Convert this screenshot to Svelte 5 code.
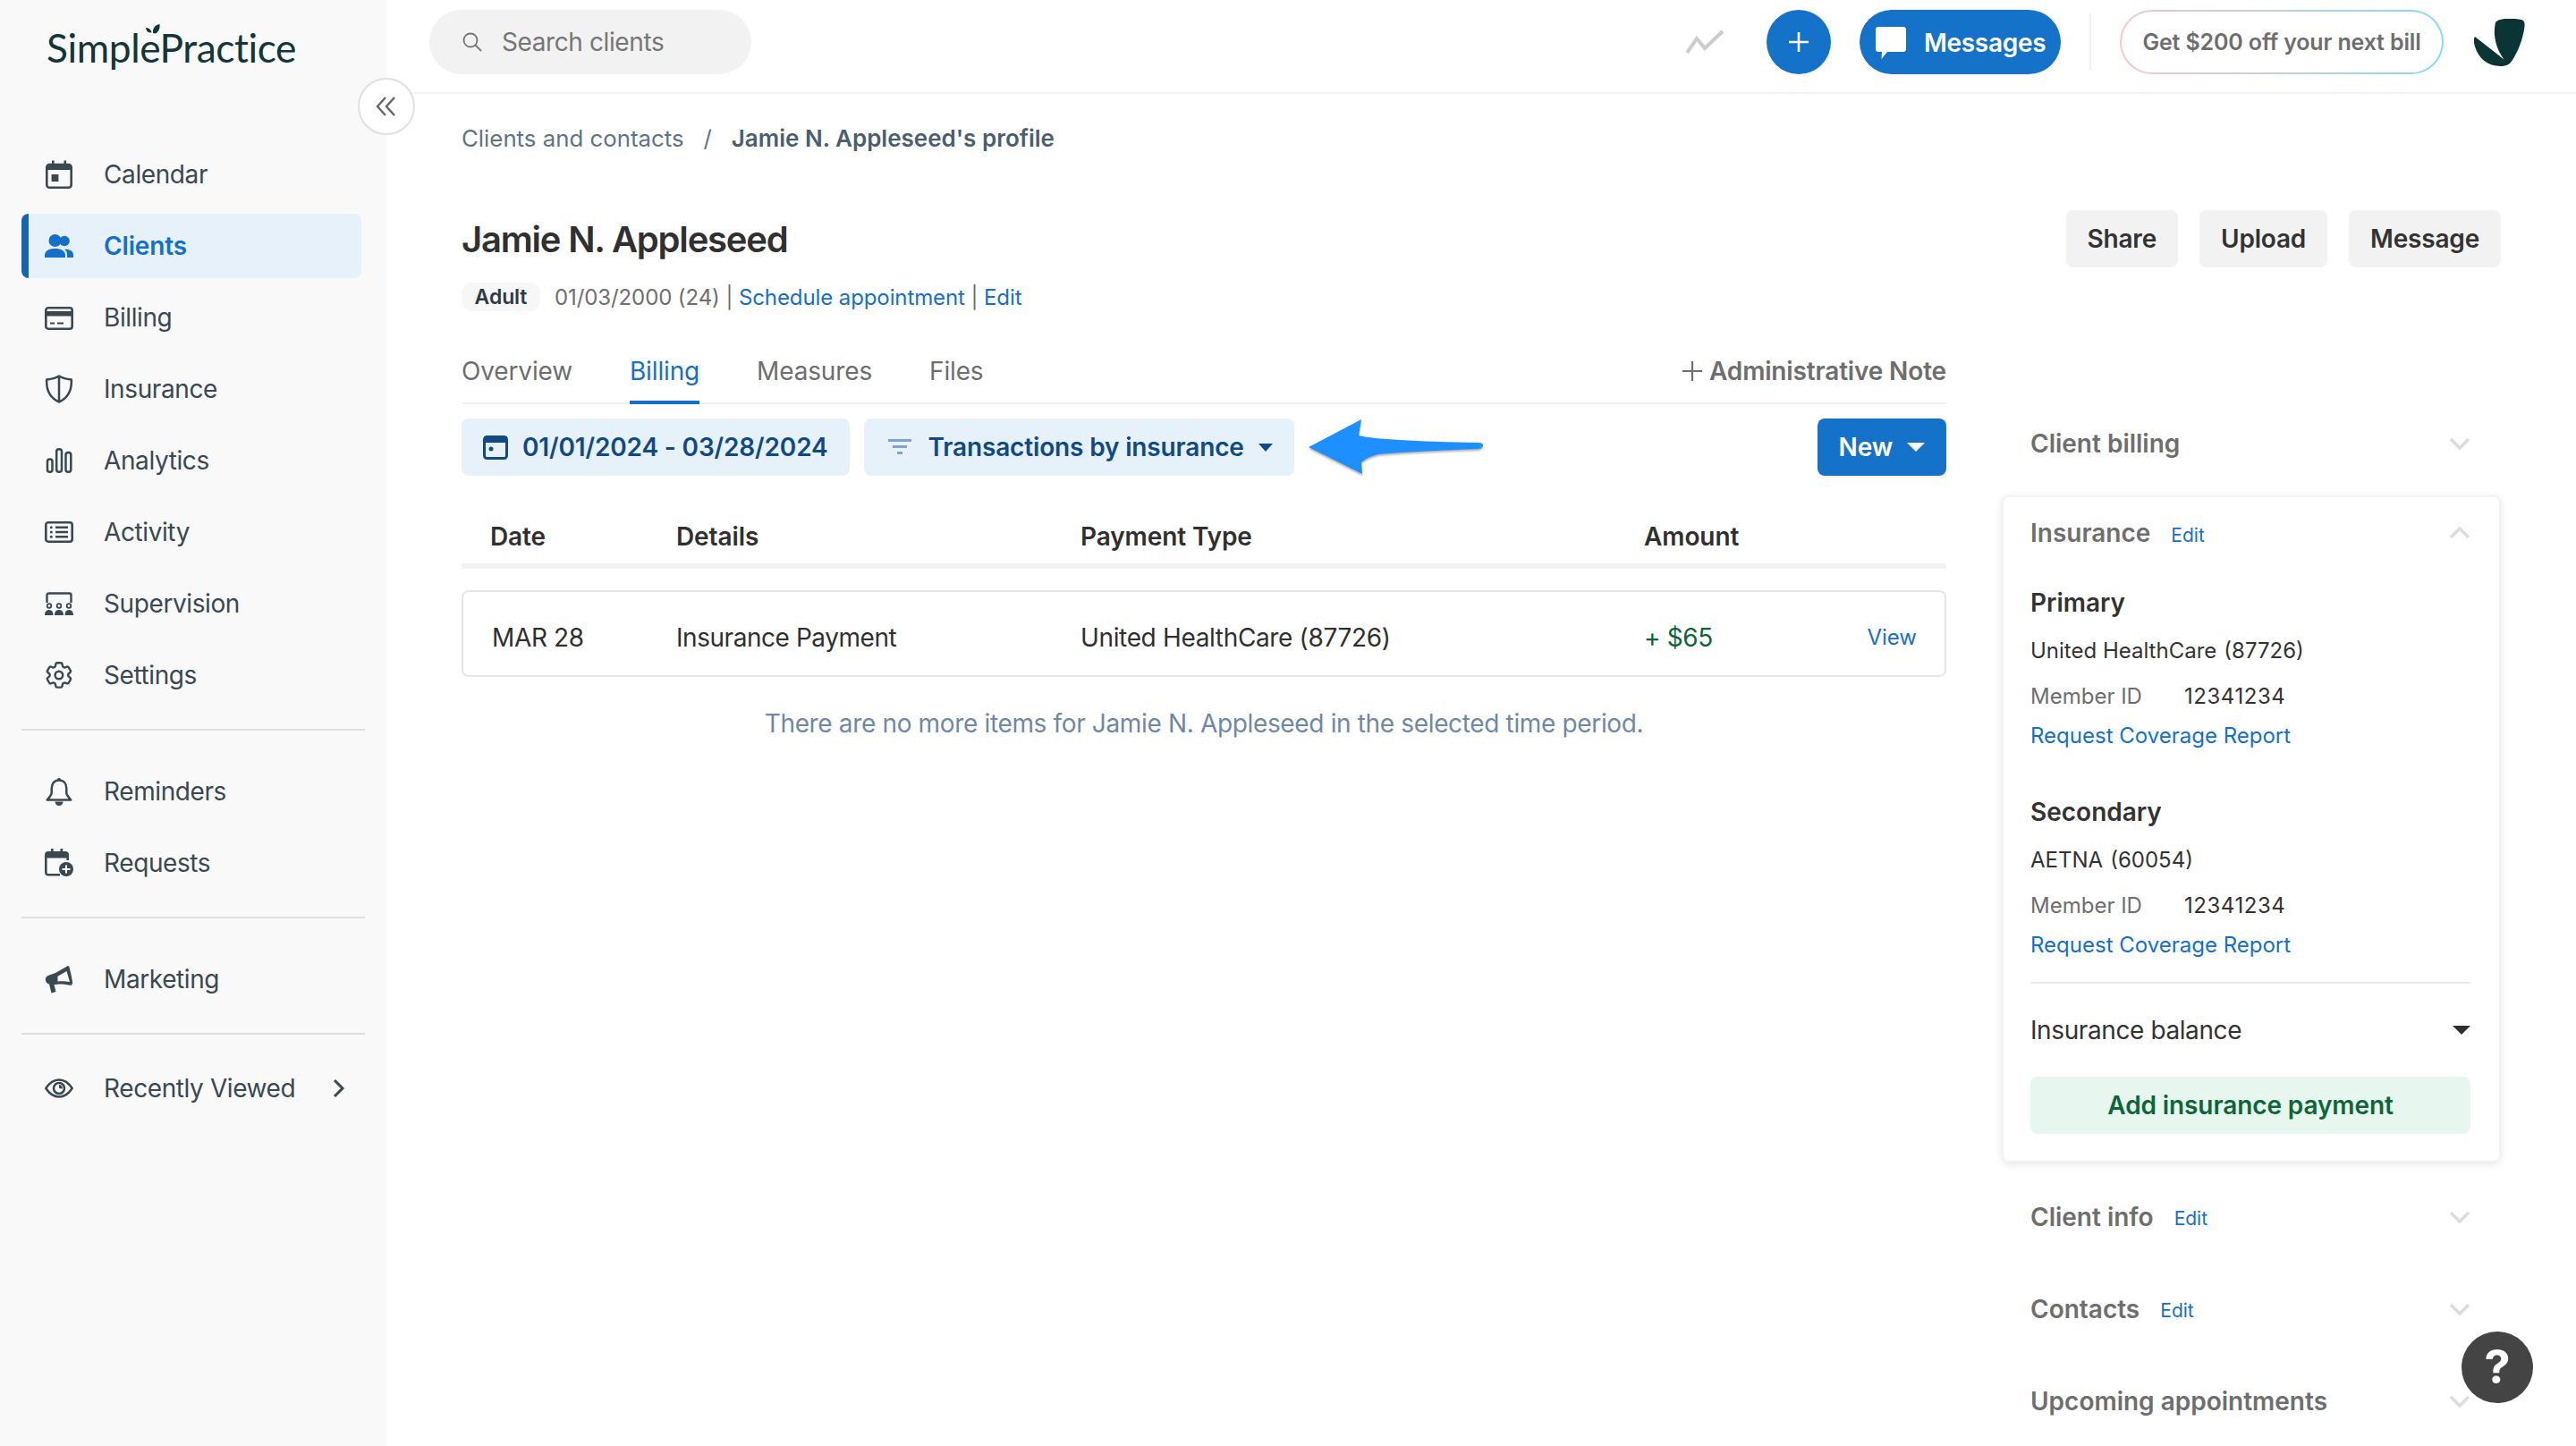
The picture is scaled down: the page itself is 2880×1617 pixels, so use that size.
<script lang="ts">
	const icons: Record<string, string> = {
		calendar: `<rect x="2.3" y="5" width="27.4" height="25.7" rx="3" fill="none" stroke="currentColor" stroke-width="2.6"/><path d="M2 5h28v6H2z" fill="currentColor"/><path d="M8 0.5h2.6V6H8zM21.5 0.5h2.6V6h-2.6z" fill="currentColor"/><rect x="7.6" y="16" width="7.8" height="8" fill="currentColor"/>`,
		users: `<circle cx="11.5" cy="10" r="7"/><circle cx="22" cy="10.5" r="5.8"/><path d="M0 29v-2.500c0-5 4.500-7.500 11.500-7.500s11.500 2.500 11.500 7.500V29z"/><path d="M25 29v-3c0-2.800-1-4.800-3-6.200 6-.4 10 2 10 6.200v3z"/>`,
		card: `<rect x="1.300" y="5.300" width="29.400" height="23.400" rx="2.600" fill="none" stroke="currentColor" stroke-width="2.600"/><path d="M1 9h30v5.500H1z" fill="currentColor"/><path d="M6 22.500h5M14 22.500h7" stroke="currentColor" stroke-width="2.200" fill="none"/>`,
		shield: `<path d="M16 1.500C20 4 24.500 5 29.800 5.500c.6 11-2.800 20-13.800 25C5 25.500 1.600 16.500 2.200 5.500 7.500 5 12 4 16 1.500zM16 2v28" fill="none" stroke="currentColor" stroke-width="2.500" stroke-linejoin="round"/>`,
		bars: `<g fill="none" stroke="currentColor" stroke-width="2.500"><rect x="3" y="14.500" width="5.500" height="14.300" rx="2.500"/><rect x="13.200" y="3.300" width="5.800" height="25.500" rx="2.800"/><rect x="23.500" y="7" width="5.800" height="21.800" rx="2.800"/></g>`,
		list: `<rect x="1.300" y="5.300" width="29.400" height="21.400" rx="2.600" fill="none" stroke="currentColor" stroke-width="2.600"/><path d="M12 10.700h14M12 16h14M12 21.300h14" stroke="currentColor" stroke-width="2.400" fill="none"/><circle cx="7.300" cy="10.700" r="1.500" fill="currentColor"/><circle cx="7.300" cy="16" r="1.500" fill="currentColor"/><circle cx="7.300" cy="21.300" r="1.500" fill="currentColor"/>`,
		board: `<path d="M2.500 15V6.500C2.500 5.300 3.300 4.500 4.500 4.500h23c1.200 0 2 .8 2 2V15" fill="none" stroke="currentColor" stroke-width="2.400"/><g fill="currentColor"><circle cx="5" cy="18.500" r="2.300" fill="none" stroke="currentColor" stroke-width="1.800"/><circle cx="16" cy="18.500" r="2.300" fill="none" stroke="currentColor" stroke-width="1.800"/><circle cx="27" cy="18.500" r="2.300" fill="none" stroke="currentColor" stroke-width="1.800"/><path d="M0 29c0-4 2-6 5-6s4.500 2 4.500 6zM11 29c0-4 2-6 5-6s5 2 5 6zM22.500 29c0-4 1.500-6 4.500-6s5 2 5 6z"/></g>`,
		gear: `<path d="M9.594 3.94c.09-.542.56-.94 1.11-.94h2.593c.55 0 1.02.398 1.11.94l.213 1.281c.063.374.313.686.645.87.074.04.147.083.22.127.324.196.72.257 1.075.124l1.217-.456a1.125 1.125 0 011.37.49l1.296 2.247a1.125 1.125 0 01-.26 1.431l-1.003.827c-.293.24-.438.613-.431.992a6.759 6.759 0 010 .255c-.007.378.138.75.43.99l1.005.828c.424.35.534.954.26 1.43l-1.298 2.247a1.125 1.125 0 01-1.369.491l-1.217-.456c-.355-.133-.75-.072-1.076.124a6.57 6.57 0 01-.22.128c-.331.183-.581.495-.644.869l-.213 1.28c-.09.543-.56.941-1.11.941h-2.594c-.55 0-1.02-.398-1.11-.94l-.213-1.281c-.062-.374-.312-.686-.644-.87a6.52 6.52 0 01-.22-.127c-.325-.196-.72-.257-1.076-.124l-1.217.456a1.125 1.125 0 01-1.369-.49l-1.297-2.247a1.125 1.125 0 01.26-1.431l1.004-.827c.292-.24.437-.613.43-.992a6.932 6.932 0 010-.255c.007-.378-.138-.75-.43-.99l-1.004-.828a1.125 1.125 0 01-.26-1.43l1.297-2.247a1.125 1.125 0 011.37-.491l1.216.456c.356.133.751.072 1.076-.124.072-.044.146-.087.22-.128.332-.183.582-.495.644-.869l.214-1.281z" transform="translate(-2.300 -2.300) scale(1.520)" fill="none" stroke="currentColor" stroke-width="1.600"/><circle cx="15.900" cy="16" r="4.300" fill="none" stroke="currentColor" stroke-width="2.500"/>`,
		bell: `<path d="M16 3.500c-5.300 0-8.300 3.800-8.300 9v5c0 2.500-2 4.800-5 8h26.600c-3-3.200-5-5.500-5-8v-5c0-5.200-3-9-8.300-9z" fill="none" stroke="currentColor" stroke-width="2.500" stroke-linejoin="round"/><circle cx="16" cy="2.500" r="1.800" fill="currentColor"/><path d="M11.500 27.500h9c0 2.500-2 4.500-4.500 4.500s-4.500-2-4.500-4.500z" fill="currentColor"/>`,
		request: `<path d="M17 29.300H4c-1.700 0-2.700-1-2.700-2.700V7c0-1.600 1-2.700 2.700-2.700h19c1.700 0 2.700 1 2.700 2.700v6" fill="none" stroke="currentColor" stroke-width="2.600"/><path d="M1 5h25.500v5.500H1zM7 0h2.600v5H7zM17.500 0h2.600v5h-2.600z" fill="currentColor"/><circle cx="24" cy="23" r="8" fill="currentColor"/><path d="M24 18.500v9M19.500 23h9" stroke="#fff" stroke-width="2"/>`,
		megaphone: `<path d="M26 1 12 9 5 11.500c-3.500 1-4.500 3.500-4 6 .4 2 1.800 3.600 4 4l2.500 10 5-1.500-2-8c6-1 12-.5 20 1z" fill="currentColor"/><path d="M24.500 7 14.500 12.800v5.700c4-.5 9-.5 13.500.5z" fill="#f9f9f9"/><path d="M26 1.500 28.500 12l1.500 9" fill="none" stroke="currentColor" stroke-width="2.500"/>`,
		eye: `<path d="M1.300 16C5.500 9.500 10 6.500 16 6.500S26.500 9.500 30.700 16C26.500 22.500 22 25.500 16 25.500S5.500 22.500 1.300 16z" fill="none" stroke="currentColor" stroke-width="2.500" stroke-linejoin="round"/><circle cx="16" cy="16" r="6" fill="none" stroke="currentColor" stroke-width="2.500"/><path d="M16 12a4 4 0 0 1 3.900 4.500l-3.900-.5z" fill="currentColor"/>`
	};

	const navGroups = [
		[
			{ label: 'Calendar', icon: 'calendar' },
			{ label: 'Clients', icon: 'users', active: true },
			{ label: 'Billing', icon: 'card' },
			{ label: 'Insurance', icon: 'shield' },
			{ label: 'Analytics', icon: 'bars' },
			{ label: 'Activity', icon: 'list' },
			{ label: 'Supervision', icon: 'board' },
			{ label: 'Settings', icon: 'gear' }
		],
		[
			{ label: 'Reminders', icon: 'bell' },
			{ label: 'Requests', icon: 'request' }
		],
		[{ label: 'Marketing', icon: 'megaphone' }],
		[{ label: 'Recently Viewed', icon: 'eye', more: true }]
	];

	const tabs = ['Overview', 'Billing', 'Measures', 'Files'];

	const policies = [
		{ title: 'Primary', payer: 'United HealthCare', code: '(87726)', memberId: '12341234' },
		{ title: 'Secondary', payer: 'AETNA', code: '(60054)', memberId: '12341234' }
	];
</script>

<div class="app">
	<aside class="sidebar">
		<div class="logo">
			<span>SimplePractice</span>
			<svg class="logo-leaf" viewBox="0 0 17 15" width="17" height="15">
				<path d="M9 10C8.500 5 11 1 16.500 0c.5 4-.5 8-4.500 10.500z" fill="#12363a" />
				<path d="M1 4c3 0 5.500 1.500 6.500 5.500C4 10 1.500 8 1 4z" fill="#12363a" />
			</svg>
		</div>
		<button class="collapse" aria-label="Collapse sidebar">
			<svg viewBox="0 0 24 24" width="24" height="24" fill="none" stroke="#666" stroke-width="2.400">
				<path d="M11 2 2 12l9 10M21 2l-9 10 9 10" />
			</svg>
		</button>
		<nav>
			{#each navGroups as group, g}
				{#if g > 0}<hr class="nav-divider" />{/if}
				<div class="nav-group">
					{#each group as item}
						<a class="nav-item" class:active={item.active} href="#/">
							<svg class="nav-icon" viewBox="0 0 32 32" width="32" height="32" fill="currentColor">
								{@html icons[item.icon]}
							</svg>
							<span>{item.label}</span>
							{#if item.more}
								<svg class="more" viewBox="0 0 14 22" width="14" height="22" fill="none" stroke="currentColor" stroke-width="3">
									<path d="M2 2l9 9-9 9" />
								</svg>
							{/if}
						</a>
					{/each}
				</div>
			{/each}
		</nav>
	</aside>

	<div class="main">
		<header class="topbar">
			<div class="search">
				<svg viewBox="0 0 22 22" width="22" height="22" fill="none" stroke="#767676" stroke-width="1.800">
					<circle cx="9" cy="9" r="7.500" />
					<path d="M14.500 14.500 21 21" />
				</svg>
				<span>Search clients</span>
			</div>
			<svg class="trend" viewBox="0 0 42 26" width="42" height="26" fill="none" stroke="#ccc" stroke-width="4">
				<path d="M1 25 12 9l9 11L41 1" />
			</svg>
			<button class="round-add" aria-label="Add">
				<svg viewBox="0 0 24 24" width="24" height="24" stroke="#fff" stroke-width="2.600"><path d="M12 1v22M1 12h22" /></svg>
			</button>
			<button class="messages">
				<svg viewBox="0 0 34 36" width="34" height="36" fill="#fff">
					<path d="M3 0h28c1.700 0 3 1.300 3 3v22c0 1.700-1.300 3-3 3H13L6.500 36 7 28H3c-1.700 0-3-1.300-3-3V3c0-1.700 1.300-3 3-3z" />
				</svg>
				Messages
			</button>
			<span class="top-divider"></span>
			<button class="promo">Get $200 off your next bill</button>
			<svg class="mark" viewBox="0 0 58 53" width="58" height="53" fill="#0b3534">
				<path d="M25 4C29 -1 44 -1 54 1c4 1 4 5 3 11-2 12-7 25-13 34-3 5-7 7-13 7C16 53 6 44 2 31c-1-4-2-8 0-11l33 26 -.5-.5C28 37 21 21 25 4z" />
			</svg>
		</header>

		<div class="content">
			<div class="breadcrumb">
				<span>Clients and contacts</span>
				<span class="slash">/</span>
				<strong>Jamie N. Appleseed's profile</strong>
			</div>

			<section class="client-head">
				<div>
					<h1>Jamie N. Appleseed</h1>
					<div class="client-meta">
						<span class="badge">Adult</span>
						<span>01/03/2000 (24) | <a href="#/">Schedule appointment</a> | <a href="#/">Edit</a></span>
					</div>
				</div>
				<div class="actions">
					<button>Share</button>
					<button>Upload</button>
					<button>Message</button>
				</div>
			</section>

			<div class="columns">
				<div class="left">
					<div class="tabs">
						{#each tabs as tab}
							<span class="tab" class:current={tab === 'Billing'}>{tab}</span>
						{/each}
						<span class="admin-note">
							<svg viewBox="0 0 22 22" width="22" height="22" stroke="#6e6e6e" stroke-width="2.200"><path d="M11 0v22M0 11h22" /></svg>
							Administrative Note
						</span>
					</div>

					<div class="filters">
						<button class="filter">
							<svg viewBox="0 0 28 28" width="28" height="28">
								<rect x="1.500" y="2.500" width="25" height="24" rx="3" fill="none" stroke="#0f4a87" stroke-width="3" />
								<path d="M1 2h26v7H1z" fill="#0f4a87" />
								<circle cx="9" cy="16" r="2.500" fill="#0f4a87" />
							</svg>
							01/01/2024 - 03/28/2024
						</button>
						<button class="filter by-type">
							<svg class="funnel" viewBox="0 0 26 20" width="26" height="20" fill="#7ea5cf">
								<path d="M0 1h26v3H0zM5 8h16v3H5zM10 15h6v3h-6z" />
							</svg>
							<span>Transactions by insurance</span>
							<svg viewBox="0 0 16 9" width="16" height="9" fill="#0f4a87"><path d="M0 0h16L8 9z" /></svg>
						</button>
						<svg class="arrow" viewBox="0 0 196 70" width="196" height="70">
							<path d="M0 35 59 4 56 22Q80 28 190 30Q195 30 195 33Q195 36 190 37Q110 40 78 43Q66 46 59 52L60 65Z" fill="#1e8fff" />
						</svg>
						<button class="new">
							New
							<svg viewBox="0 0 20 10" width="20" height="10" fill="#fff"><path d="M0 0h20L10 10z" /></svg>
						</button>
					</div>

					<div class="table-head">
						<span class="col-date">Date</span>
						<span class="col-details">Details</span>
						<span class="col-type">Payment Type</span>
						<span class="col-amount">Amount</span>
					</div>
					<div class="table-row">
						<span class="col-date">MAR 28</span>
						<span class="col-details">Insurance Payment</span>
						<span class="col-type">United HealthCare (87726)</span>
						<span class="col-amount amount">+ $65</span>
						<a class="view" href="#/">View</a>
					</div>
					<p class="end-note">There are no more items for Jamie N. Appleseed in the selected time period.</p>
				</div>

				<aside class="right">
					<div class="acc-item">
						<span class="acc-title">Client billing</span>
						<svg class="chev" viewBox="0 0 24 14" width="24" height="14"><path d="M2 2l10 10L22 2" /></svg>
					</div>

					<div class="card">
						<div class="card-head">
							<span class="acc-title">Insurance</span>
							<a class="edit" href="#/">Edit</a>
							<svg class="chev" viewBox="0 0 24 14" width="24" height="14"><path d="M2 12 12 2l10 10" /></svg>
						</div>
						{#each policies as policy}
							<div class="policy">
								<h3>{policy.title}</h3>
								<div class="payer"><span>{policy.payer}</span><span>{policy.code}</span></div>
								<div class="member"><span class="member-label">Member ID</span><span class="member-id">{policy.memberId}</span></div>
								<a href="#/">Request Coverage Report</a>
							</div>
						{/each}
						<hr />
						<div class="balance">
							<span>Insurance balance</span>
							<svg viewBox="0 0 20 10" width="20" height="10" fill="#303030"><path d="M0 0h20L10 10z" /></svg>
						</div>
						<button class="add-payment">Add insurance payment</button>
					</div>

					<div class="acc-item after-card">
						<span class="acc-title">Client info</span>
						<a class="edit" href="#/">Edit</a>
						<svg class="chev" viewBox="0 0 24 14" width="24" height="14"><path d="M2 2l10 10L22 2" /></svg>
					</div>
					<div class="acc-item">
						<span class="acc-title">Contacts</span>
						<a class="edit" href="#/">Edit</a>
						<svg class="chev" viewBox="0 0 24 14" width="24" height="14"><path d="M2 2l10 10L22 2" /></svg>
					</div>
					<div class="acc-item">
						<span class="acc-title">Upcoming appointments</span>
						<svg class="chev" viewBox="0 0 24 14" width="24" height="14"><path d="M2 2l10 10L22 2" /></svg>
					</div>
				</aside>
			</div>
		</div>
	</div>

	<button class="help" aria-label="Help">?</button>
</div>

<style>
	:global(body) {
		margin: 0;
		background: #fff;
	}

	.app {
		position: relative;
		display: flex;
		width: 2880px;
		height: 1617px;
		overflow: hidden;
		font-family: Inter, 'Noto Sans', sans-serif;
		font-size: 28px;
		color: #303030;
	}

	button {
		font-family: inherit;
		border: none;
		cursor: pointer;
	}

	a {
		color: #1470c8;
		text-decoration: none;
	}

	.sidebar {
		position: relative;
		flex: 0 0 432px;
		background: #f9f9f9;
	}

	.logo {
		position: relative;
		height: 159px;
		padding: 24px 0 0 52px;
		box-sizing: border-box;
		font-family: Lato, sans-serif;
		font-size: 44.3px;
		line-height: 58px;
		color: #12363a;
		letter-spacing: -0.4px;
	}

	.logo-leaf {
		position: absolute;
		left: 162px;
		top: 27px;
	}

	.collapse {
		position: absolute;
		left: 400px;
		top: 87px;
		z-index: 2;
		display: flex;
		align-items: center;
		justify-content: center;
		width: 64px;
		height: 64px;
		padding: 0;
		background: #fff;
		border: 2px solid #e0e0e0;
		border-radius: 50%;
	}

	.nav-group {
		display: flex;
		flex-direction: column;
		gap: 8px;
	}

	.nav-item {
		display: flex;
		align-items: center;
		gap: 34px;
		box-sizing: border-box;
		width: 380px;
		height: 72px;
		margin-left: 24px;
		padding-left: 18px;
		border-left: 8px solid transparent;
		border-radius: 8px;
		color: #3a4852;
		letter-spacing: -0.4px;
		white-space: nowrap;
	}

	.nav-item.active {
		background: #e7f1fa;
		border-left-color: #1265b5;
		color: #1470c8;
		font-weight: 600;
		letter-spacing: -0.15px;
	}

	.nav-icon {
		flex: none;
	}

	.more {
		margin-left: 8px;
	}

	.nav-divider {
		width: 384px;
		height: 2px;
		margin: 24px 0 32px 24px;
		background: #e0e0e0;
		border: none;
	}

	.nav-divider:last-of-type {
		margin-bottom: 24px;
	}

	.main {
		flex: 1;
		min-width: 0;
	}

	.topbar {
		display: flex;
		align-items: center;
		box-sizing: border-box;
		height: 105px;
		padding: 0 57px 9px 48px;
		border-bottom: 2px solid #f2f2f2;
	}

	.search {
		display: flex;
		align-items: center;
		gap: 22px;
		box-sizing: border-box;
		width: 360px;
		height: 72px;
		padding-left: 37px;
		background: #f2f2f2;
		border-radius: 36px;
		color: #767676;
		letter-spacing: -0.4px;
	}

	.trend {
		margin-left: auto;
	}

	.round-add {
		display: flex;
		align-items: center;
		justify-content: center;
		width: 72px;
		height: 72px;
		margin-left: 48px;
		padding: 0;
		background: #1472c9;
		border-radius: 50%;
	}

	.messages {
		display: flex;
		align-items: center;
		gap: 20px;
		box-sizing: border-box;
		width: 225px;
		height: 72px;
		margin-left: 32px;
		padding: 2px 0 0 18px;
		background: #1472c9;
		border-radius: 36px;
		color: #fff;
		font-size: 28px;
		font-weight: 600;
		letter-spacing: -0.3px;
	}

	.top-divider {
		width: 2px;
		height: 64px;
		margin: 0 32px;
		background: #f0f0f0;
	}

	.promo {
		box-sizing: border-box;
		width: 362px;
		height: 72px;
		padding: 0;
		border: 2px solid transparent;
		border-radius: 36px;
		background:
			linear-gradient(#fff, #fff) padding-box,
			linear-gradient(90deg, #f8c8cc, #84dcf2) border-box;
		color: #6e6e6e;
		font-size: 25px;
		font-weight: 600;
		letter-spacing: -0.15px;
	}

	.mark {
		margin-left: 33px;
	}

	.content {
		padding: 31px 84px 0 84px;
	}

	.breadcrumb {
		display: flex;
		align-items: center;
		height: 36px;
		font-size: 25.8px;
		color: #5f7385;
	}

	.slash {
		margin: 0 22px;
	}

	.breadcrumb strong {
		font-size: 26px;
		font-weight: 600;
		color: #4a5e70;
	}

	.client-head {
		display: flex;
		justify-content: space-between;
		align-items: flex-start;
		margin-top: 63px;
	}

	h1 {
		height: 64px;
		margin: 1px 0 16px;
		font-size: 40px;
		font-weight: 600;
		line-height: 64px;
		letter-spacing: -1.2px;
		color: #303030;
	}

	.client-meta {
		display: flex;
		align-items: center;
		gap: 16px;
		font-size: 24px;
		color: #6e6e6e;
		letter-spacing: -0.1px;
	}

	.badge {
		display: flex;
		align-items: center;
		justify-content: center;
		width: 88px;
		height: 32px;
		background: #f7f7f7;
		border-radius: 12px;
		font-size: 23px;
		font-weight: 600;
		color: #2e3a44;
	}

	.actions {
		display: flex;
		gap: 24px;
	}

	.actions button {
		height: 64px;
		padding: 0 24px;
		background: #f2f2f2;
		border-radius: 8px;
		color: #333;
		font-size: 28px;
		font-weight: 600;
		letter-spacing: -0.2px;
	}

	.columns {
		display: flex;
		justify-content: space-between;
		align-items: flex-start;
	}

	.left {
		width: 1660px;
	}

	.tabs {
		display: flex;
		align-items: center;
		box-sizing: border-box;
		height: 74px;
		margin-top: 30px;
		padding-top: 2px;
		border-bottom: 2px solid #f2f2f2;
		color: #6e6e6e;
		letter-spacing: -0.15px;
	}

	.tab {
		position: relative;
		display: flex;
		align-items: center;
		height: 100%;
		margin-right: 64px;
	}

	.tab.current {
		color: #1470c8;
	}

	.tab.current::after {
		content: '';
		position: absolute;
		left: 0;
		right: 0;
		bottom: -2px;
		height: 4px;
		background: #1470c8;
	}

	.admin-note {
		display: flex;
		align-items: center;
		gap: 8px;
		margin-left: auto;
		font-weight: 600;
	}

	.filters {
		display: flex;
		align-items: center;
		gap: 16px;
		margin-top: 16px;
	}

	.filter {
		display: flex;
		align-items: center;
		gap: 16px;
		height: 64px;
		padding: 0 24px;
		background: #e7f1fa;
		border-radius: 8px;
		color: #0f4a87;
		font-size: 28px;
		font-weight: 600;
		letter-spacing: -0.15px;
	}

	.by-type {
		padding-left: 27px;
	}

	.funnel {
		margin-right: 3px;
	}

	.arrow {
		margin-block: -3px;
		filter: drop-shadow(0 2px 1px rgba(0, 0, 0, 0.3));
	}

	.new {
		display: flex;
		align-items: center;
		gap: 16px;
		height: 64px;
		margin-left: auto;
		padding: 0 24px;
		background: #1472c9;
		border-radius: 8px;
		color: #fff;
		font-size: 28px;
		font-weight: 600;
		letter-spacing: -0.15px;
	}

	.table-head,
	.table-row {
		position: relative;
		display: flex;
		align-items: center;
		box-sizing: border-box;
	}

	.table-head {
		height: 104px;
		padding-top: 38px;
		border-bottom: 6px solid #f2f2f2;
		font-weight: 600;
		letter-spacing: -0.1px;
	}

	.table-row {
		height: 97px;
		margin-top: 24px;
		padding-top: 8px;
		border: 2px solid #e6e6e6;
		border-radius: 8px;
		letter-spacing: -0.35px;
	}

	.col-date {
		box-sizing: border-box;
		width: 240px;
		padding-left: 32px;
	}

	.table-row .col-date {
		width: 238px;
	}

	.col-details {
		width: 452px;
	}

	.table-row .col-details {
		letter-spacing: -0.45px;
	}

	.col-type {
		width: 630px;
	}

	.amount {
		color: #0d6638;
	}

	.view {
		position: absolute;
		right: 31px;
		font-size: 24px;
		letter-spacing: 0;
	}

	.end-note {
		margin: 35px 0 0;
		text-align: center;
		color: #6f88a5;
		letter-spacing: -0.35px;
	}

	.right {
		width: 558px;
		padding-top: 96px;
	}

	.acc-item {
		display: flex;
		align-items: center;
		box-sizing: border-box;
		height: 103px;
		padding: 0 34px 0 32px;
	}

	.acc-item.after-card {
		margin-top: 9px;
	}

	.acc-title {
		font-weight: 600;
		color: #6e6e6e;
	}

	.edit {
		margin: 4px 0 0 23px;
		font-size: 21px;
	}

	.chev {
		margin-left: auto;
		fill: none;
		stroke: #dcdcdc;
		stroke-width: 3.5;
	}

	.card {
		box-sizing: border-box;
		height: 746px;
		margin-top: 7px;
		padding: 0 32px 0 30px;
		border: 2px solid #f2f2f2;
		border-radius: 8px;
		box-shadow: 0 2px 8px rgba(0, 0, 0, 0.1);
	}

	.card-head {
		display: flex;
		align-items: center;
		height: 80px;
	}

	.policy {
		font-size: 24px;
	}

	.policy h3 {
		margin: 0;
		height: 40px;
		padding-top: 18px;
		font-size: 28px;
		font-weight: 600;
		line-height: 40px;
		color: #333;
	}

	.policy + .policy h3 {
		padding-top: 48px;
	}

	.payer {
		display: flex;
		gap: 8px;
		margin-top: 17px;
		line-height: 34px;
		color: #333;
	}

	.member {
		display: flex;
		margin-top: 17px;
		line-height: 34px;
	}

	.member-label {
		width: 172px;
		color: #6e6e6e;
	}

	.member-id {
		letter-spacing: 0.55px;
		color: #333;
	}

	.policy a {
		display: block;
		margin-top: 10px;
		line-height: 34px;
	}

	.card hr {
		height: 2px;
		margin: 24px 0 0;
		background: #ececec;
		border: none;
	}

	.balance {
		display: flex;
		align-items: center;
		justify-content: space-between;
		height: 50px;
		margin-top: 27px;
		color: #333;
		letter-spacing: -0.4px;
	}

	.add-payment {
		width: 100%;
		height: 64px;
		margin-top: 27px;
		background: #e7f6ee;
		border-radius: 8px;
		color: #0d6638;
		font-size: 28px;
		font-weight: 600;
		letter-spacing: -0.1px;
	}

	.help {
		position: absolute;
		left: 2752px;
		top: 1489px;
		width: 80px;
		height: 80px;
		padding: 0;
		background: #444;
		border-radius: 50%;
		color: #fff;
		font-size: 52px;
		font-weight: 700;
		line-height: 80px;
	}
</style>
